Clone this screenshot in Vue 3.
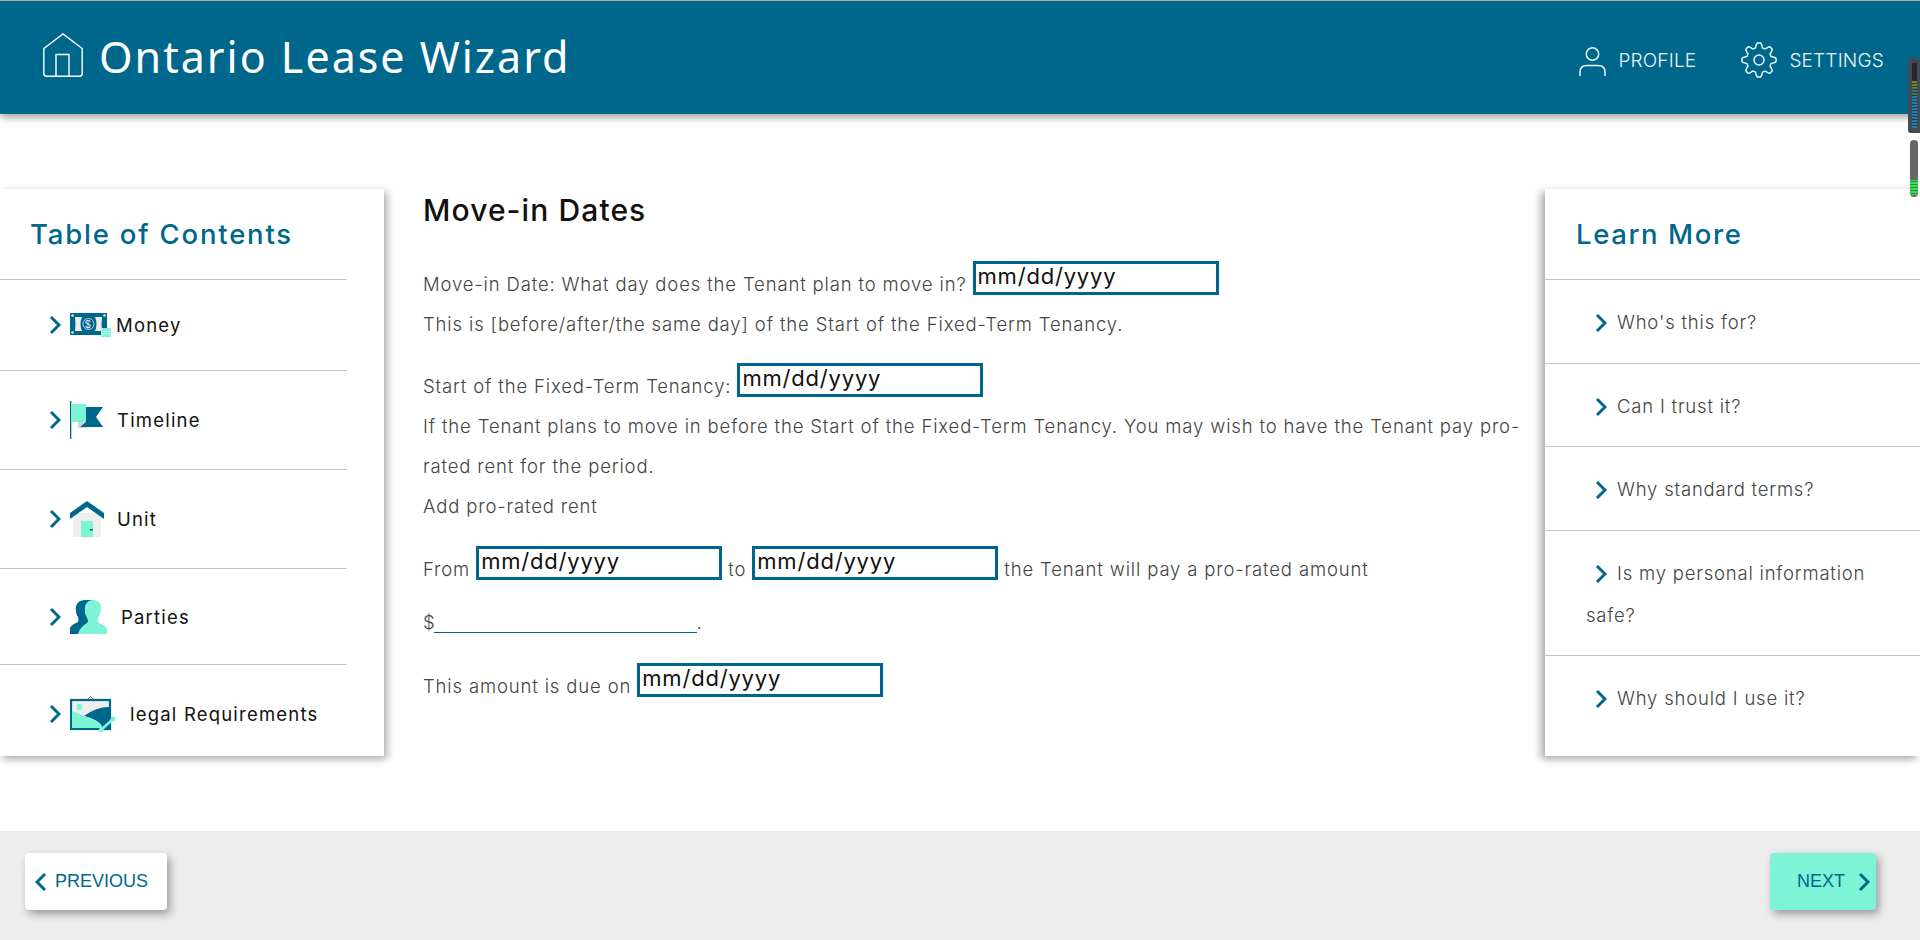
<template>
  <div class="page">
    <header class="topbar">
      <div class="brand">
        <svg class="brand-icon" viewBox="0 0 40 44" fill="none" stroke="#fff" stroke-width="1.4">
          <path d="M0.8 15.5 L20 0.9 L39.2 15.5 V40.5 Q39.2 43.2 36.5 43.2 H3.5 Q0.8 43.2 0.8 40.5 Z" />
          <path d="M13 43.2 V21.5 H26 V43.2" />
        </svg>
        <span class="brand-name">Ontario Lease Wizard</span>
      </div>
      <nav class="topnav">
        <a class="topnav-link">
          <svg class="profile-icon" viewBox="0 0 27 29" fill="none" stroke="#eaf5f8" stroke-width="1.5">
            <circle cx="13.5" cy="7" r="6.2" />
            <path d="M1 29 V25 Q1 18.5 8 18.5 H19 Q26 18.5 26 25 V29" />
          </svg>
          PROFILE
        </a>
        <a class="topnav-link">
          <svg class="gear-icon" viewBox="0 0 36 36" fill="none" stroke="#eaf5f8" stroke-width="1.5">
            <circle cx="18" cy="18" r="5" />
            <path :d="gearPath" stroke-linejoin="round" />
          </svg>
          SETTINGS
        </a>
      </nav>
    </header>

    <main class="content">
      <aside class="panel toc">
        <h2 class="panel-title">Table of Contents</h2>
        <ul class="toc-list">
          <li class="toc-item money">
            <svg class="chevron" viewBox="0 0 12 20"><path d="M2 2 L10 10 L2 18" /></svg>
            <svg class="toc-icon" width="41" height="24" viewBox="0 0 41 24">
              <rect x="0" y="0" width="37" height="22" fill="#00678c" />
              <path d="M5 4 H12 Q9 11 12 18 H5 Q6 11 5 4 Z M25 4 H32 Q31 11 32 18 H25 Q28 11 25 4 Z" fill="#eee" />
              <circle cx="2.5" cy="2.5" r="1.3" fill="#d8e8ee" />
              <circle cx="34.5" cy="2.5" r="1.3" fill="#d8e8ee" />
              <circle cx="2.5" cy="19.5" r="1.3" fill="#d8e8ee" />
              <circle cx="18.5" cy="11" r="5.5" fill="none" stroke="#cfe3ea" stroke-width="0.8" />
              <text x="18.5" y="14.5" class="bill-sign">$</text>
              <rect x="31" y="15" width="10" height="9" fill="#7df4d5" />
              <path d="M31 18.5 H41 M31 21 H41" stroke="#d8f5ee" stroke-width="1" />
            </svg>
            <span>Money</span>
          </li>
          <li class="toc-item timeline">
            <svg class="chevron" viewBox="0 0 12 20"><path d="M2 2 L10 10 L2 18" /></svg>
            <svg class="toc-icon" width="34" height="38" viewBox="0 0 34 38">
              <rect x="0" y="0" width="1.3" height="38" fill="#00678c" />
              <rect x="8" y="21" width="8" height="6" fill="#c9d8de" />
              <path d="M10 26 L16 21 V6 H33 L26 16 L33 26 Z" fill="#00678c" />
              <rect x="1.3" y="3" width="14.7" height="18" fill="#7df4d5" />
            </svg>
            <span>Timeline</span>
          </li>
          <li class="toc-item unit">
            <svg class="chevron" viewBox="0 0 12 20"><path d="M2 2 L10 10 L2 18" /></svg>
            <svg class="toc-icon" width="34" height="36" viewBox="0 0 34 36">
              <rect x="3" y="12" width="28" height="24" fill="#eee" />
              <path d="M0 12 L17 0 L34 12 V18 L17 6 L0 18 Z" fill="#00678c" />
              <rect x="11" y="20" width="12" height="16" fill="#7df4d5" />
              <rect x="20" y="28" width="3" height="1.5" fill="#00678c" />
            </svg>
            <span>Unit</span>
          </li>
          <li class="toc-item parties">
            <svg class="chevron" viewBox="0 0 12 20"><path d="M2 2 L10 10 L2 18" /></svg>
            <svg class="toc-icon" width="37" height="34" viewBox="0 0 37 34">
              <path d="M0 34 V28 Q1 25 8 22 Q9 20 8 17 Q5 13 6 6 Q8 0 15 0 H22 V34 Z" fill="#00678c" />
              <path d="M8 34 Q10 27 17 23 Q19 21 17 18 Q14 13 15 6 Q17 0 23 0 Q30 0 31 7 Q31 14 28 18 Q27 21 29 23 Q36 26 37 29 V34 Z" fill="#7df4d5" />
            </svg>
            <span>Parties</span>
          </li>
          <li class="toc-item legal">
            <svg class="chevron" viewBox="0 0 12 20"><path d="M2 2 L10 10 L2 18" /></svg>
            <svg class="toc-icon" width="46" height="36" viewBox="0 0 46 36">
              <rect x="1" y="4" width="39" height="29" fill="#eee" stroke="#00678c" stroke-width="2.2" />
              <path d="M18 3 L20.5 0.5 L23 3" fill="none" stroke="#00678c" stroke-width="0.8" />
              <circle cx="9.5" cy="11" r="3" fill="#7df4d5" />
              <path d="M14 20 Q26 11 39 11 V32 H33 Q30 24 14 20 Z" fill="#00678c" />
              <path d="M2 15 Q10 18 14 20 Q30 24 33 32 H2 Z" fill="#7df4d5" />
              <path d="M31 34 L43 23" stroke="#7df4d5" stroke-width="2.6" />
              <circle cx="31" cy="34" r="2.2" fill="#7df4d5" />
              <circle cx="43" cy="23" r="2.4" fill="#7df4d5" />
            </svg>
            <span>legal Requirements</span>
          </li>
        </ul>
      </aside>

      <section class="form">
        <h1 class="form-title">Move-in Dates</h1>
        <div class="form-block">
          <p>Move-in Date: What day does the Tenant plan to move in? <span class="date-box">mm/dd/yyyy</span></p>
          <p>This is [before/after/the same day] of the Start of the Fixed-Term Tenancy.</p>
        </div>
        <div class="form-block tenancy">
          <p>Start of the Fixed-Term Tenancy: <span class="date-box">mm/dd/yyyy</span></p>
          <p>If the Tenant plans to move in before the Start of the Fixed-Term Tenancy. You may wish to have the Tenant pay pro-rated rent for the period.</p>
          <p>Add pro-rated rent</p>
        </div>
        <div class="form-block">
          <p>From <span class="date-box">mm/dd/yyyy</span> to <span class="date-box">mm/dd/yyyy</span> the Tenant will pay a pro-rated amount</p>
        </div>
        <div class="form-block amount">
          <p>$<span class="amount-line"></span>.</p>
        </div>
        <div class="form-block">
          <p>This amount is due on <span class="date-box">mm/dd/yyyy</span></p>
        </div>
      </section>

      <aside class="panel learn">
        <h2 class="panel-title">Learn More</h2>
        <ul class="learn-list">
          <li v-for="q in questions" :key="q" class="learn-item">
            <svg class="chevron" viewBox="0 0 12 20"><path d="M2 2 L10 10 L2 18" /></svg>{{ q }}
          </li>
        </ul>
      </aside>
    </main>

    <footer class="footer">
      <button class="nav-btn prev">
        <svg class="chevron" viewBox="0 0 12 20"><path d="M10 2 L2 10 L10 18" /></svg>
        PREVIOUS
      </button>
      <button class="nav-btn next">
        NEXT
        <svg class="chevron" viewBox="0 0 12 20"><path d="M2 2 L10 10 L2 18" /></svg>
      </button>
    </footer>

    <div class="meter">
      <div class="meter-track"></div>
    </div>
    <div class="scroll-thumb"></div>
  </div>
</template>

<script setup>
const questions = [
  "Who's this for?",
  "Can I trust it?",
  "Why standard terms?",
  "Is my personal information safe?",
  "Why should I use it?",
];

// 8 rounded teeth around the centre of the gear
const gearPoints = [];
for (let i = 0; i < 160; i++) {
  const a = (i / 160) * Math.PI * 2;
  const wave = Math.max(-1, Math.min(1, Math.cos(a * 8) * 1.5));
  const r = 14.8 + wave * 2.3;
  gearPoints.push(`${(18 + r * Math.sin(a)).toFixed(2)} ${(18 - r * Math.cos(a)).toFixed(2)}`);
}
const gearPath = `M${gearPoints.join(" L")} Z`;
</script>

<style>
html, body {
  margin: 0;
  background: #fff;
  overflow: hidden;
}
</style>

<style scoped>
.page {
  position: relative;
  height: 940px;
  display: flex;
  flex-direction: column;
  font-family: "Inter", "Liberation Sans", sans-serif;
  color: #444;
  overflow: hidden;
}

.topbar {
  height: 113px;
  border-top: 1px solid #aaa;
  background: #00678c;
  box-shadow: 0 3px 8px rgba(0, 0, 0, 0.4);
  display: flex;
  align-items: center;
  justify-content: space-between;
  padding: 0 36px 0 43px;
  flex-shrink: 0;
  z-index: 2;
}

.brand {
  display: flex;
  align-items: center;
  gap: 16px;
  color: #fff;
  margin-top: -5px;
}

.brand-icon {
  width: 40px;
  height: 44px;
}

.brand-name {
  font-family: "Noto Sans", sans-serif;
  font-size: 43px;
  letter-spacing: 2px;
  line-height: 50px;
  margin-top: 3px;
}

.topnav {
  display: flex;
  align-items: center;
  gap: 45px;
  color: #eaf5f8;
  font-size: 19px;
  font-weight: 300;
  letter-spacing: 0.2px;
  margin-top: 5px;
}

.topnav-link {
  display: flex;
  align-items: center;
  gap: 12px;
}

.profile-icon {
  width: 27px;
  height: 29px;
  margin-top: 2px;
}

.gear-icon {
  width: 36px;
  height: 36px;
}

.content {
  height: 717px;
  flex-shrink: 0;
  display: flex;
  align-items: flex-start;
  padding-top: 75px;
  box-sizing: border-box;
}

.panel {
  height: 567px;
  background: #fff;
  flex-shrink: 0;
}

.toc {
  width: 384px;
  box-shadow: 3px 3px 8px rgba(0, 0, 0, 0.35);
}

.learn {
  width: 375px;
  box-shadow: -4px 3px 8px rgba(0, 0, 0, 0.35);
}

.panel-title {
  margin: 0;
  padding: 25px 32px 0 31px;
  height: 91px;
  box-sizing: border-box;
  font-size: 27.5px;
  line-height: 40px;
  font-weight: 500;
  letter-spacing: 1.6px;
  color: #00678c;
  border-bottom: 1px solid #c4c4c4;
}

.toc .panel-title {
  width: 347px;
  padding-left: 30px;
  letter-spacing: 1.8px;
}

.toc-list, .learn-list {
  list-style: none;
  margin: 0;
  padding: 0;
}

.toc-item {
  width: 347px;
  box-sizing: border-box;
  display: flex;
  align-items: center;
  padding-left: 49px;
  font-size: 18.5px;
  letter-spacing: 1.2px;
  color: #111;
  border-bottom: 1px solid #c4c4c4;
}

.toc-item:last-child {
  border-bottom: none;
}

.chevron {
  width: 12px;
  height: 20px;
  fill: none;
  stroke: #00678c;
  stroke-width: 3;
  flex-shrink: 0;
}

.toc-icon {
  flex-shrink: 0;
  margin-left: 9px;
}

.bill-sign {
  font-family: "Liberation Sans", sans-serif;
  font-size: 10px;
  fill: #e4f0f4;
  text-anchor: middle;
}

.money { height: 91px; }
.timeline { height: 99px; }
.unit { height: 99px; }
.parties { height: 96px; }
.legal { height: 90px; padding-top: 8px; }

.money span { margin-left: 5px; }
.timeline span { margin-left: 13px; }
.unit span { margin-left: 13px; }
.parties span { margin-left: 14px; }
.legal span { margin-left: 14px; }

.form {
  flex: 1;
  padding: 0 12px 0 39px;
  min-width: 0;
  font-size: 18.5px;
  font-weight: 300;
  letter-spacing: 0.85px;
  line-height: 40px;
}

.form p {
  margin: 0;
}

.form-title {
  margin: 0 0 30px;
  font-size: 30px;
  font-weight: 500;
  letter-spacing: 1.1px;
  line-height: 42px;
  color: #111;
}

.form-block {
  margin-bottom: 18.5px;
}

.form-block.tenancy {
  margin-bottom: 20.5px;
}

.form-block.amount {
  margin-top: -5.5px;
  margin-bottom: 21px;
}

.date-box {
  display: inline-block;
  box-sizing: border-box;
  width: 246px;
  height: 34px;
  padding-left: 2px;
  border: 3px solid #00678c;
  color: #111;
  font-size: 22px;
  font-weight: 400;
  letter-spacing: 0.8px;
  line-height: 24px;
  vertical-align: 7px;
}

.amount-line {
  display: inline-block;
  width: 263px;
  height: 1px;
  margin-left: -2px;
  background: #00678c;
  vertical-align: -4px;
}

.learn-item {
  padding: 21px 32px 19.5px 41px;
  box-sizing: border-box;
  font-size: 18.5px;
  font-weight: 300;
  letter-spacing: 0.8px;
  line-height: 42px;
  text-indent: 9px;
  border-bottom: 1px solid #c4c4c4;
}

.learn-item .chevron {
  margin-right: 10px;
  vertical-align: -4px;
}

.learn-item:last-child {
  border-bottom: none;
}

.footer {
  flex: 1;
  background: #ededed;
  display: flex;
  align-items: center;
  justify-content: space-between;
  padding: 0 44px 8px 25px;
}

.nav-btn {
  height: 57px;
  border: none;
  border-radius: 4px;
  font-family: "Liberation Sans", sans-serif;
  font-size: 18px;
  color: #00678c;
  display: flex;
  align-items: center;
  box-shadow: 3px 4px 8px rgba(0, 0, 0, 0.35);
}

.prev {
  width: 142px;
  background: #fff;
  padding: 0 0 0 10px;
  gap: 8px;
}

.next {
  width: 106px;
  background: #7df4d5;
  padding: 0 0 0 27px;
  gap: 13px;
}

.meter {
  position: absolute;
  top: 58px;
  right: 0;
  width: 12px;
  height: 75px;
  background: #3f4c57;
  border-radius: 3px 0 0 3px;
  box-sizing: border-box;
  padding: 5px 3px 5px 4px;
  z-index: 3;
}

.meter-track {
  height: 100%;
  width: 5px;
  background:
    repeating-linear-gradient(transparent 0 2px, rgba(30, 36, 42, 0.75) 2px 3px),
    linear-gradient(#23282c 0 28%, #7d7f22 28% 38%, #2f7f60 38% 52%, #1e7fb0 52%);
}

.scroll-thumb {
  position: absolute;
  top: 140px;
  right: 2px;
  width: 8px;
  height: 57px;
  border-radius: 4px;
  background:
    linear-gradient(#666 0 70%, transparent 70% 96%, #666 96%),
    repeating-linear-gradient(#3fdc5a 0 2px, #2a8a3c 2px 3px);
  z-index: 3;
}
</style>
